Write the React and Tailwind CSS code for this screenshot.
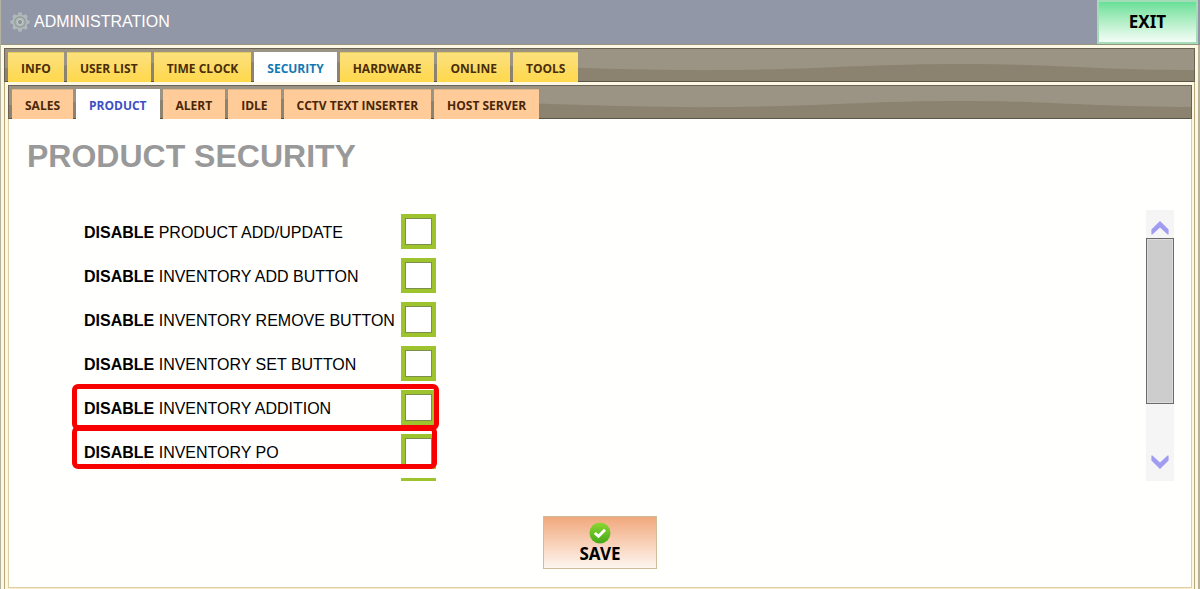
const MAIN_TABS = ['INFO', 'USER LIST', 'TIME CLOCK', 'SECURITY', 'HARDWARE', 'ONLINE', 'TOOLS'];
const SUB_TABS = ['SALES', 'PRODUCT', 'ALERT', 'IDLE', 'CCTV TEXT INSERTER', 'HOST SERVER'];
const OPTIONS = [
  'PRODUCT ADD/UPDATE',
  'INVENTORY ADD BUTTON',
  'INVENTORY REMOVE BUTTON',
  'INVENTORY SET BUTTON',
  'INVENTORY ADDITION',
  'INVENTORY PO',
];

function Gear() {
  return (
    <svg className="size-5" viewBox="0 0 20 20" aria-hidden="true">
      <g fill="#b0b9ba">
        {[0, 45, 90, 135, 180, 225, 270, 315].map((a) => (
          <path key={a} d="M7.6 4 L8.4 0.6 Q10 0 11.6 0.6 L12.4 4 Z" transform={`rotate(${a} 10 10)`} />
        ))}
        <circle cx="10" cy="10" r="7.6" />
      </g>
      <circle cx="10" cy="10" r="5.2" fill="none" stroke="#8f9998" strokeWidth="1.2" />
      <circle cx="10" cy="10" r="2.6" fill="#8a9494" stroke="#c3caca" strokeWidth="1" />
    </svg>
  );
}

function TabBar({ label, tabs, active, idleClass, activeClass, className }) {
  return (
    <nav
      aria-label={label}
      className={`relative flex h-[34px] items-end gap-[3px] overflow-hidden border border-b-0 border-[#6a6355] bg-[#9b9383] ${className}`}
    >
      <svg className="absolute inset-0 size-full" viewBox="0 0 1180 33" preserveAspectRatio="none" aria-hidden="true">
        <path
          d="M0 19 C150 12 300 12 420 15 C540 17 620 22 720 21 C820 20 860 15 950 15 C1040 15 1080 21 1180 21 V33 H0 Z"
          fill="#8b826f"
        />
        <rect x="0" y="32" width="1180" height="1" fill="#5c5648" />
      </svg>
      {tabs.map((tab) => (
        <button
          key={tab}
          type="button"
          aria-current={tab === active ? 'page' : undefined}
          className={`relative h-[30px] border-t px-[13px] pt-0.5 text-[12px] leading-6 font-bold whitespace-nowrap ${tab === active ? activeClass : idleClass}`}
        >
          {tab}
        </button>
      ))}
    </nav>
  );
}

export default function App() {
  return (
    <div className="flex h-screen flex-col overflow-hidden border-l border-[#b4b3a0] bg-[#fdf8e4] font-['Open_Sans','Noto_Sans',sans-serif] text-black">
      <header className="flex h-[45px] shrink-0 items-stretch justify-between border-b border-[#96967f] bg-[#9297a7]">
        <h1 className="flex items-center gap-1 pl-[9px] font-['Liberation_Sans',sans-serif] text-[16px] text-white">
          <Gear />
          ADMINISTRATION
        </h1>
        <button
          type="button"
          className="mr-0.5 w-[101px] border-2 border-[#a5dcb8] bg-linear-to-b from-[#66df98] to-[#f4fdf7] font-['Noto_Sans',sans-serif] text-[17px] font-bold"
        >
          EXIT
        </button>
      </header>

      <div className="flex grow flex-col border-r-2 border-[#b9b29a] px-[3px] pt-[3px]">
        <TabBar
          label="Administration"
          tabs={MAIN_TABS}
          active="SECURITY"
          className="pl-[3px]"
          idleClass="border-[#e6c95c] bg-linear-to-b from-[#fbe07c] to-[#ffd84a] text-[#4a2e08]"
          activeClass="border-white bg-white text-[#1278b4]"
        />
        <div className="flex grow flex-col border-x border-[#b8a878] pt-[3px] pr-0.5 pl-[3px]">
          <TabBar
            label="Security"
            tabs={SUB_TABS}
            active="PRODUCT"
            className="pl-[3px]"
            idleClass="border-[#e2b58c] bg-[#ffcc99] text-[#4a2608]"
            activeClass="border-white bg-white text-[#3d4fc4]"
          />
          <main className="flex grow flex-col border-x border-b border-[#dccfa6] bg-[#fffffe]">
            <h2 className="pt-[17px] pl-[18px] font-['Liberation_Sans',sans-serif] text-[32px] leading-10 font-bold text-[#999]">
              PRODUCT SECURITY
            </h2>
            <div className="mt-[34px] mr-[17px] ml-[75px] flex h-[271px] justify-between">
              <div className="relative -ml-3 overflow-hidden pt-1 pr-1 pl-3">
                <ul className="flex flex-col gap-[9px] font-['Liberation_Sans',sans-serif] text-[16px]">
                  {OPTIONS.map((name) => (
                    <li key={name}>
                      <label className="flex items-center">
                        <span className="w-[317px] pt-0.5 whitespace-nowrap">
                          <b>DISABLE</b> {name}
                        </span>
                        <input
                          type="checkbox"
                          className="size-[35px] appearance-none border-4 border-[#9dc32d] bg-white inset-ring inset-ring-[#7d8f4c]"
                        />
                      </label>
                    </li>
                  ))}
                  <li className="flex justify-end">
                    <input
                      type="checkbox"
                      aria-label="DISABLE"
                      className="size-[35px] appearance-none border-4 border-[#9dc32d] bg-white"
                    />
                  </li>
                </ul>
                <div className="pointer-events-none absolute top-[174px] left-0 h-[46px] w-[367px] rounded-md border-5 border-[#f80000]" />
                <div className="pointer-events-none absolute top-[216px] left-0 h-[43px] w-[365px] rounded-md border-5 border-[#f80000]" />
              </div>
              <div className="flex w-7 flex-col bg-[#f5f5f5]">
                <button type="button" aria-label="Scroll up" className="flex h-7 items-end justify-center pb-[3px]">
                  <svg className="h-[14px] w-[18px]" viewBox="0 0 18 14" aria-hidden="true">
                    <path d="M9 0 L17.6 8.4 V13.6 H16.6 L9 6.6 L1.4 13.6 H0.4 V8.4 Z" fill="#a09cf0" />
                  </svg>
                </button>
                <div className="h-[166px] border border-[#6a6a6a] bg-[#cdcdcd] inset-ring inset-ring-[#dcdcdc]" />
                <button type="button" aria-label="Scroll down" className="mt-auto flex h-7 items-start justify-center pt-0.5">
                  <svg className="h-[14px] w-[18px]" viewBox="0 0 18 14" aria-hidden="true">
                    <path d="M9 14 L17.6 5.6 V0.4 H16.6 L9 7.4 L1.4 0.4 H0.4 V5.6 Z" fill="#a09cf0" />
                  </svg>
                </button>
              </div>
            </div>
            <button
              type="button"
              className="mt-[35px] flex h-[53px] w-[114px] flex-col items-center self-center border border-[#cdbd98] bg-linear-to-b from-[#f0a87c] to-[#fdf6f0] pt-[5px] font-['Noto_Sans',sans-serif] text-[17px] leading-5 font-bold"
            >
              <svg className="size-[22px]" viewBox="0 0 22 22" aria-hidden="true">
                <defs>
                  <linearGradient id="tick-fill" x1="0" y1="0" x2="0" y2="1">
                    <stop offset="0" stopColor="#8cd832" />
                    <stop offset="1" stopColor="#45a818" />
                  </linearGradient>
                </defs>
                <circle cx="11" cy="11" r="10.5" fill="url(#tick-fill)" />
                <path d="M5.8 11 L9.5 14.3 L16 7.8" fill="none" stroke="#fff" strokeWidth="3" />
              </svg>
              SAVE
            </button>
          </main>
          <div className="h-px shrink-0 bg-[#f8eccb]" />
        </div>
      </div>
    </div>
  );
}
